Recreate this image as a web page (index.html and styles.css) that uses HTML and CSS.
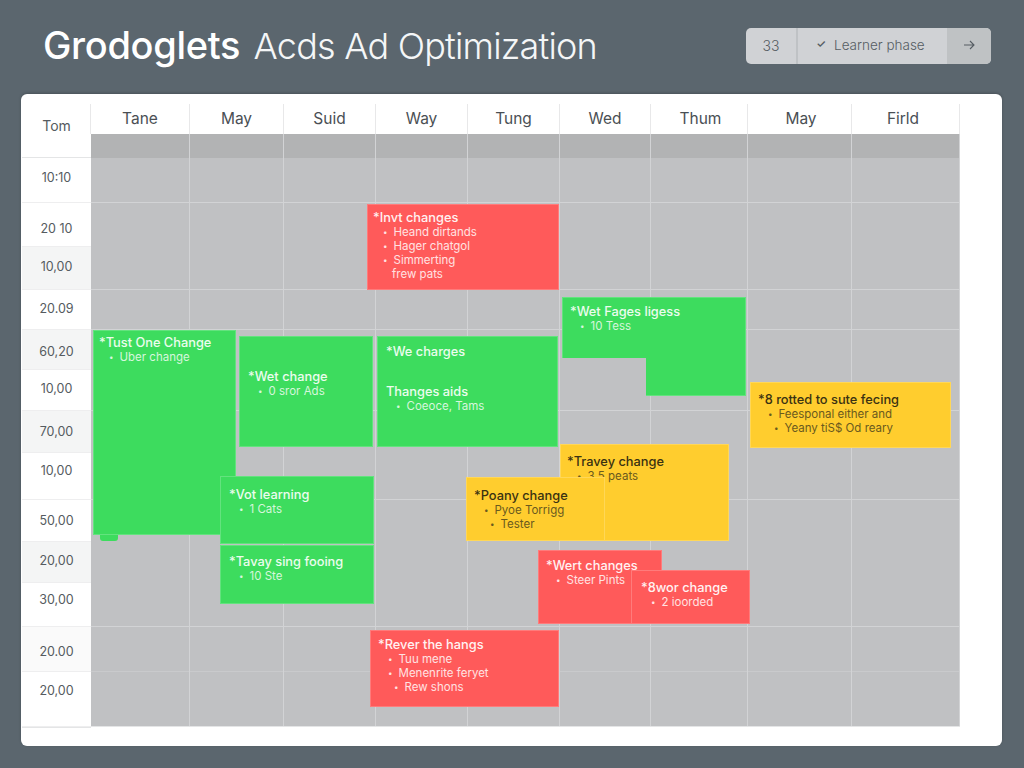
FILE: index.html
```html
<!DOCTYPE html>
<html lang="en">
<head>
  <meta charset="UTF-8">
  <title>Grodoglets Acds Ad Optimization</title>
  <link rel="stylesheet" href="styles.css">
</head>
<body>

  <!-- TOP BAR -->
  <header class="topbar">
    <h1><strong>Grodoglets</strong> Acds Ad Optimization</h1>
    <div class="phase">
      <span class="phase-count">33</span>
      <span class="phase-label"><span class="phase-check">&#10003;</span> Learner phase</span>
      <span class="phase-next">
        <svg width="12" height="12" viewBox="0 0 12 12" fill="none" stroke="currentColor" stroke-width="1.1"><path d="M1 6h10M7 2l4 4-4 4"/></svg>
      </span>
    </div>
  </header>

  <!-- CALENDAR CARD -->
  <main class="card">
    <div class="times">
      <div class="corner">Tom</div>
      <div class="time">10:10</div>
      <div class="time">20 10</div>
      <div class="time shaded">10,00</div>
      <div class="time">20.09</div>
      <div class="time shaded">60,20</div>
      <div class="time">10,00</div>
      <div class="time shaded">70,00</div>
      <div class="time">10,00</div>
      <div class="time">50,00</div>
      <div class="time shaded">20,00</div>
      <div class="time">30,00</div>
      <div class="time faint">20.00</div>
      <div class="time">20,00</div>
    </div>

    <div class="week">
      <div class="days">
        <div class="day">Tane</div>
        <div class="day">May</div>
        <div class="day">Suid</div>
        <div class="day">Way</div>
        <div class="day">Tung</div>
        <div class="day">Wed</div>
        <div class="day">Thum</div>
        <div class="day">May</div>
        <div class="day">Firld</div>
      </div>

      <div class="board">
        <div class="strip"></div>
        <div class="rows">
          <div class="row line"></div>
          <div class="row"></div>
          <div class="row line"></div>
          <div class="row line"></div>
          <div class="row"></div>
          <div class="row line"></div>
          <div class="row"></div>
          <div class="row line"></div>
          <div class="row"></div>
          <div class="row"></div>
          <div class="row line"></div>
          <div class="row line-faint"></div>
          <div class="row"></div>
        </div>
        <div class="columns">
          <div></div><div></div><div></div><div></div><div></div><div></div><div></div><div></div><div></div>
        </div>

        <!-- Events sit on top of the grid -->
        <div class="event red ev-invt">
          <p class="ev-title">*Invt changes</p>
          <ul>
            <li>Heand dirtands</li>
            <li>Hager chatgol</li>
            <li>Simmerting</li>
            <li class="plain">frew pats</li>
          </ul>
        </div>

        <div class="event green ev-tust">
          <p class="ev-title">*Tust One Change</p>
          <ul><li>Uber change</li></ul>
        </div>

        <div class="event green ev-wet">
          <p class="ev-title">*Wet change</p>
          <ul><li>0 sror Ads</li></ul>
        </div>

        <div class="event green ev-charges">
          <p class="ev-title">*We charges</p>
          <p class="ev-title ev-second">Thanges aids</p>
          <ul><li>Coeoce, Tams</li></ul>
        </div>

        <div class="event green ev-pages">
          <p class="ev-title">*Wet Fages ligess</p>
          <ul><li>10 Tess</li></ul>
        </div>

        <div class="event green ev-learning">
          <p class="ev-title">*Vot learning</p>
          <ul><li>1 Cats</li></ul>
        </div>

        <div class="event green ev-tavay">
          <p class="ev-title">*Tavay sing fooing</p>
          <ul><li>10 Ste</li></ul>
        </div>

        <div class="event yellow ev-rotted">
          <p class="ev-title">*8 rotted to sute fecing</p>
          <ul>
            <li>Feesponal either and</li>
            <li class="deep">Yeany tiS$ Od reary</li>
          </ul>
        </div>

        <div class="event yellow ev-travey">
          <p class="ev-title">*Travey change</p>
          <ul><li>3 5 peats</li></ul>
        </div>

        <div class="event yellow ev-poany">
          <p class="ev-title">*Poany change</p>
          <ul>
            <li>Pyoe Torrigg</li>
            <li class="deep">Tester</li>
          </ul>
        </div>

        <div class="event red ev-wert">
          <p class="ev-title">*Wert changes</p>
          <ul><li>Steer Pints</li></ul>
        </div>

        <div class="event red ev-swor">
          <p class="ev-title">*8wor change</p>
          <ul><li>2 ioorded</li></ul>
        </div>

        <div class="event red ev-rever">
          <p class="ev-title">*Rever the hangs</p>
          <ul>
            <li>Tuu mene</li>
            <li>Menenrite feryet</li>
            <li class="deep">Rew shons</li>
          </ul>
        </div>
      </div>
    </div>
  </main>

</body>
</html>
```

FILE: styles.css
```css
/* ------------------------------
   BASIC STYLES
------------------------------ */
* {
  box-sizing: border-box;
  margin: 0;
  padding: 0;
}

:root {
  --row-heights: 45px 44px 43px 40px 40px 41px 42px 47px 42px 41px 44px 45px 55px;
  --col-widths: 99px 94px 92px 92px 92px 91px 97px 104px 108px;
}

body {
  font-family: Inter, "Liberation Sans", sans-serif;
  background-color: #5b666e;
  height: 768px;
  overflow: hidden;
}

/* ------------------------------
   TOP BAR
------------------------------ */
.topbar {
  display: flex;
  justify-content: space-between;
  align-items: flex-start;
  height: 94px;
  padding: 23px 33px 0 43px;
}

h1 {
  font-size: 36px;
  font-weight: 300;
  line-height: 44px;
  letter-spacing: -0.8px;
  color: #f4f6f7;
}

h1 strong {
  font-size: 38px;
  font-weight: 500;
  letter-spacing: -0.3px;
  color: #fff;
  margin-right: 4px;
}

.phase {
  display: flex;
  height: 36px;
  margin-top: 5px;
  border-radius: 5px;
  overflow: hidden;
  font-size: 13.5px;
  font-weight: 300;
  color: #565d63;
  background: #d0d2d5;
}

.phase span {
  display: flex;
  align-items: center;
  justify-content: center;
  padding-bottom: 2px;
}

.phase-count {
  width: 52px;
  border-right: 2px solid #bfc2c5;
  font-size: 14px;
}

.phase-label {
  width: 149px;
  gap: 8px;
  padding-right: 4px;
}

.phase-check {
  font-size: 11px;
  font-weight: 600;
}

.phase-next {
  width: 44px;
  background: #bfc2c4;
}

/* ------------------------------
   CALENDAR CARD
------------------------------ */
.card {
  display: flex;
  align-items: flex-start;
  height: 652px;
  margin: 0 22px 0 21px;
  padding: 10px 0 0 1px;
  background: #fff;
  border-radius: 6px;
  box-shadow: 0 -1px 3px rgba(0, 0, 0, 0.2);
}

/* Time column on the left */
.times {
  display: grid;
  grid-template-columns: 69px;
  grid-template-rows: 54px var(--row-heights);
  border-bottom: 1px solid #e4e5e6;
}

.corner,
.time {
  display: flex;
  align-items: center;
  justify-content: center;
  color: #555b60;
}

.corner {
  font-size: 14px;
  padding-bottom: 10px;
  border-bottom: 1px solid #e4e5e6;
}

.time {
  font-size: 12.5px;
  border-bottom: 1px solid #eeeeef;
}

/* The labels don't sit dead centre in their rows */
.time:nth-child(2)  { padding-bottom: 6px; }
.time:nth-child(3)  { padding-top: 8px; }
.time:nth-child(4)  { padding-bottom: 4px; }
.time:nth-child(5)  { padding-bottom: 2px; }
.time:nth-child(6)  { padding-top: 4px; }
.time:nth-child(7)  { padding-bottom: 4px; }
.time:nth-child(9)  { padding-bottom: 12px; }
.time:nth-child(11) { padding-bottom: 4px; }
.time:nth-child(12) { padding-bottom: 10px; }
.time:nth-child(13) { padding-top: 4px; }
.time:nth-child(14) { padding-bottom: 18px; }

.shaded {
  background: #f4f5f5;
}

.faint {
  background: #fafafa;
}

/* Day headers and grid */
.week {
  width: 869px;
}

.days {
  display: grid;
  grid-template-columns: var(--col-widths);
  height: 30px;
}

.day {
  display: flex;
  align-items: center;
  justify-content: center;
  font-size: 15.5px;
  color: #4a4f54;
  padding-bottom: 2px;
  border-right: 1px solid #e8e8e9;
}

.day:first-child {
  box-shadow: -1px 0 0 #e8e8e9;
}

.day:nth-child(7),
.day:nth-child(8) {
  padding-left: 3px;
}

.day:nth-child(9) {
  padding-right: 5px;
}

.board {
  position: relative;
  height: 593px;
  background: #c0c1c3;
  border-bottom: 1px solid #e4e5e6;
}

.strip {
  height: 24px;
  background: #b2b3b4;
}

.rows {
  display: grid;
  grid-template-rows: var(--row-heights);
}

.line {
  border-bottom: 1px solid #d2d3d5;
}

.line-faint {
  border-bottom: 1px solid #c9cacc;
}

.columns {
  position: absolute;
  top: 0;
  left: 0;
  right: 0;
  bottom: 0;
  display: grid;
  grid-template-columns: var(--col-widths);
}

.columns div {
  border-right: 1px solid #d2d3d5;
}

/* ------------------------------
   EVENTS
------------------------------ */
.event {
  position: absolute;
  font-size: 11.5px;
  line-height: 14px;
  border: 1px solid rgba(255, 255, 255, 0.2);
}

.ev-title {
  font-size: 12.8px;
  line-height: 15px;
  font-weight: 500;
}

.ev-second {
  margin-top: 25px;
}

.event ul {
  list-style: none;
}

.event li {
  display: flex;
  gap: 6px;
  padding-left: 10px;
}

.event li::before {
  content: "\2022";
  font-size: 8px;
}

.event li.plain {
  padding-left: 19px;
}

.event li.plain::before {
  content: none;
}

.event li.deep {
  padding-left: 16px;
}

.green {
  background: #3ddc5e;
  color: #d6f7dc;
}

.green .ev-title {
  color: #ecfcee;
}

.red {
  background: #ff5a5a;
  color: #ffe2e2;
}

.red .ev-title {
  color: #fff2f2;
}

.yellow {
  background: #ffcd2e;
  color: #6a5a1e;
}

.yellow .ev-title {
  color: #3a3212;
}

/* Where each event lands on the grid */
.ev-invt     { left: 276px; top: 70px;  width: 192px; height: 86px;  padding: 5px 5px; }
.ev-tust     { left: 2px;   top: 196px; width: 143px; height: 205px; padding: 4px 5px; }
.ev-wet      { left: 148px; top: 202px; width: 134px; height: 111px; padding: 32px 8px; }
.ev-charges  { left: 286px; top: 202px; width: 181px; height: 111px; padding: 7px 8px; }
.ev-pages    { left: 471px; top: 163px; width: 184px; height: 99px;  padding: 6px 7px; clip-path: polygon(0 0, 100% 0, 100% 100%, 84px 100%, 84px 61px, 0 61px); }
.ev-learning { left: 129px; top: 342px; width: 154px; height: 68px;  padding: 10px 8px; }
.ev-tavay    { left: 129px; top: 411px; width: 154px; height: 59px;  padding: 8px 8px; }
.ev-rotted   { left: 659px; top: 248px; width: 201px; height: 66px;  padding: 9px 7px; }
.ev-travey   { left: 469px; top: 310px; width: 169px; height: 97px;  padding: 9px 6px; }
.ev-poany    { left: 375px; top: 343px; width: 139px; height: 64px;  padding: 10px 7px; }
.ev-wert     { left: 447px; top: 416px; width: 124px; height: 74px;  padding: 7px 7px; }
.ev-swor     { left: 540px; top: 436px; width: 119px; height: 54px;  padding: 9px 9px; }
.ev-rever    { left: 279px; top: 496px; width: 189px; height: 77px;  padding: 6px 7px; }

/* Small notch under the tall green block */
.ev-tust::after {
  content: "";
  position: absolute;
  left: 6px;
  bottom: -7px;
  width: 18px;
  height: 6px;
  background: #3ddc5e;
  border-radius: 0 0 3px 3px;
}
```
